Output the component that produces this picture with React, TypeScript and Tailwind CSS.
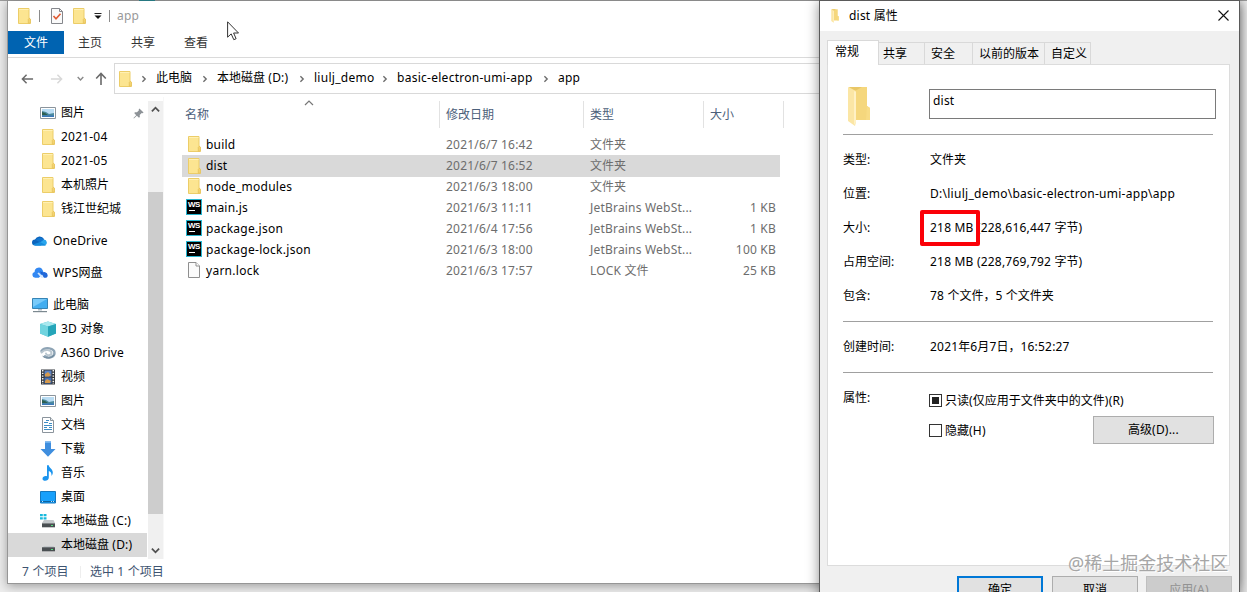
import type { ReactNode } from "react";

const isWide = (s: string) => /[\u3000-\u9fff\uff00-\uffef]/.test(s);
const latinTracking = (s: string) => (/^[a-z_.-]{9,}$|\\/.test(s) ? "tracking-[0.27px]" : "tracking-[0.2px]");

/* Chinese runs keep the 12px grid, Latin runs are set slightly wider. */
function T({ children }: { children: string }) {
  const parts = children.split(/([\u3000-\u9fff\uff00-\uffef]+)/).filter(Boolean);
  return (
    <span className="whitespace-pre">
      {parts.map((p, i) => (
        <span key={i} className={isWide(p) ? "tracking-normal" : latinTracking(p)}>
          {p}
        </span>
      ))}
    </span>
  );
}

function Folder({ className = "h-4 w-[14px]" }: { className?: string }) {
  return (
    <svg viewBox="0 0 14 16" className={`block shrink-0 ${className}`}>
      <path d="M1.500.5h10.500v9.500l1.300 1v4.500H1.500z" fill="#fce591" stroke="#eccd68" />
      <path d="M2 1h9.500v1H2z" fill="#fff0b4" />
      <path d="M11.300 15.200v-4l1-1 1 1v4z" fill="#f8d775" stroke="#e4c05a" strokeWidth=".8" />
    </svg>
  );
}

function BigFolder({ className }: { className: string }) {
  return (
    <svg viewBox="0 0 22 41" className={`block shrink-0 ${className}`}>
      <path d="M1 1h18v19l3 2v12H7z" fill="#f5d77d" />
      <path d="M1 1h13l-7 4z" fill="#e9c766" />
      <path d="M19 20l3 2v12h-4z" fill="#f8dc86" />
      <path d="M0 1l8 4v31l-1 4-7-5z" fill="#fbe6a5" />
      <path d="M6 5l2 1v30l-2 3z" fill="#fff1c4" />
    </svg>
  );
}

function Picture() {
  return (
    <svg viewBox="0 0 16 16" className="block size-4 shrink-0">
      <path d="M.5 2.500h15v11H.5z" fill="#fff" stroke="#8b949c" />
      <path d="M2 4h12v8H2z" fill="#b9dcf3" />
      <path d="M2 6l4 1 3 2 5-1v4H2z" fill="#4d8a9d" />
      <path d="M2 7l3 1 3 2H2z" fill="#2c5e50" />
      <path d="M2 10.500h12V12H2z" fill="#3b78b8" />
    </svg>
  );
}

function OneDrive() {
  return (
    <svg viewBox="0 0 16 16" className="block size-4 shrink-0">
      <path d="M3 12.600a3 3 0 010-6A5 5 0 0112 6l-3 6.600z" fill="#0b64bd" />
      <path d="M5 6a5 5 0 017 .5L9 10 3.500 6.800z" fill="#1275ce" />
      <path d="M8 9.500l4-3a3.200 3.200 0 011 6.100H3z" fill="#2aa5ec" />
      <path d="M1 11.500L8 9l6 3.300-1 .3H3z" fill="#168bdc" />
    </svg>
  );
}

function Wps() {
  return (
    <svg viewBox="0 0 16 16" className="block size-4 shrink-0">
      <path d="M3.200 12.800a3 3 0 01-.6-5.900A4.200 4.200 0 0110.600 5l1.200 3-5 4.800z" fill="#3288f2" />
      <path d="M9.500 8.600a3.400 3.400 0 016.200 1.600 2.700 2.700 0 01-2.700 2.600h-1.200z" fill="#2168d9" />
      <path d="M5.400 8.200l1.400-.8 5.200 5.400H9.200z" fill="#d4e7ff" />
      <path d="M8 6.300l3.200 1.200-1.800 1.700z" fill="#1c5fd0" />
    </svg>
  );
}

function Pc() {
  return (
    <svg viewBox="0 0 16 16" className="block size-4 shrink-0">
      <path d="M.5 1.500h15v10H.5z" fill="#43aef0" stroke="#3684b5" />
      <path d="M1 2h14L1 10z" fill="#78caf9" />
      <path d="M6 12h4v1.500H6z" fill="#b3bfc7" />
      <path d="M1 14h14v1.200H1z" fill="#7c8990" />
    </svg>
  );
}

function Cube() {
  return (
    <svg viewBox="0 0 16 16" className="block size-4 shrink-0">
      <path d="M8 .5l8 2.500v9.500L8 15.700 0 12.500V3z" fill="#48bdce" />
      <path d="M8 .5L16 3 8 5.500 0 3z" fill="#a9e8ee" />
      <path d="M0 3l8 2.500v10.200L0 12.500z" fill="#70d4df" />
      <path d="M8 5.500L16 3v9.500l-8 3.200z" fill="#25a5b9" />
    </svg>
  );
}

function A360() {
  return (
    <svg viewBox="0 0 16 16" className="block size-4 shrink-0" fill="none" strokeLinecap="round">
      <path d="M1.500 6C5 1.500 14.500 3 14.500 8c0 4-6 6-9.500 3.300" stroke="#8ea4b5" strokeWidth="2.400" />
      <path d="M1.500 7.500C5 3.500 11.500 5 11.500 8c0 2.500-5 3-5.500.6" stroke="#b9c6cf" strokeWidth="2" />
      <path d="M3 11.500c3 2.500 9 2 11-1.500" stroke="#6d879a" strokeWidth="1" />
    </svg>
  );
}

function Film() {
  return (
    <svg viewBox="0 0 16 16" className="block size-4 shrink-0">
      <path d="M1 .5h14v15H1z" fill="#33373c" />
      <path d="M4.500 1.500h7v6h-7z" fill="#5b83c4" />
      <path d="M4.500 8.500h7v6h-7z" fill="#4570b6" />
      <path d="M5 5l3-2 3 3-2 1.500H5zM5 12l2-2 4 2-1 2H5z" fill="#d79a4c" />
      <path d="M2.700 1v14M13.300 1v14" stroke="#f5f5f5" strokeWidth="1.500" strokeDasharray="1.400 1.300" />
    </svg>
  );
}

function Doc() {
  return (
    <svg viewBox="0 0 16 16" className="block size-4 shrink-0">
      <path d="M2.500.5h8l3 3v12h-11z" fill="#fff" stroke="#8b949c" />
      <path d="M10.500.5v3h3" fill="#e7ebee" stroke="#8b949c" />
      <path d="M6 3.500h3M4 5.500h4M9 6.500h3M4 8.500h8M4 10.500h3M9 10.500h3M4 12.500h8" stroke="#3d8dc4" />
    </svg>
  );
}

function Download() {
  return (
    <svg viewBox="0 0 16 16" className="block size-4 shrink-0">
      <path d="M5 .5h6V8h4.500L8 15.700.5 8H5z" fill="#3f8ede" />
      <path d="M5 .5h6V2H5z" fill="#6eb0ee" />
    </svg>
  );
}

function Music() {
  return (
    <svg viewBox="0 0 16 16" className="block size-4 shrink-0">
      <path d="M7 .3h1.800c.2 2.800 4 3.700 4 7.200 0 1.500-.6 2.600-1.400 3.500.5-2.800-.8-4.300-2.600-5v6.800c0 3.600-6.300 3.900-6.300.9 0-2.200 2.600-3 4.500-2.400z" fill="#1b94ee" />
    </svg>
  );
}

function Desktop() {
  return (
    <svg viewBox="0 0 16 16" className="block size-4 shrink-0">
      <path d="M.5 2.500h15v11.500H.5z" fill="#18a0fb" stroke="#1577bd" />
      <path d="M1 12.500h14" stroke="#0c639f" strokeWidth="1" />
      <path d="M2 12.500h1M11 12.500h1M13 12.500h1" stroke="#b8e3ff" />
    </svg>
  );
}

function Drive({ system = false }: { system?: boolean }) {
  return (
    <svg viewBox="0 0 16 16" className="block size-4 shrink-0">
      <path d={system ? "M4 7h9.500l1.500 3H2z" : "M4 9h9.500l1.500 2H2z"} fill="#c3c7ca" />
      <path d="M2 10.300h13v4H2z" fill="#4a4f52" />
      <path d="M11 12.500h2" stroke="#56e07f" />
      {system ? <path d="M0 1h2.800v2.300H0zM3.600 1h2.900v2.300H3.600zM0 4.200h2.800v2.300H0zM3.600 4.200h2.900v2.300H3.600z" fill="#19b9dd" /> : null}
    </svg>
  );
}

function WebStorm() {
  return (
    <span className="-mt-px flex size-4 shrink-0 flex-col items-center border border-[#27b5cf] bg-black">
      <span className="h-[9px] font-['Liberation_Sans',sans-serif] text-[8px] leading-[9px] font-bold tracking-[-0.4px] text-white">WS</span>
      <span className="mt-[1px] mr-[4px] h-px w-[6px] bg-white" />
    </span>
  );
}

function BlankFile() {
  return (
    <svg viewBox="0 0 14 16" className="-mt-px ml-px block h-4 w-[14px] shrink-0">
      <path d="M1.500.5h7.500l3.500 3.500v11.500h-11z" fill="#fbfbfb" stroke="#8f8f8f" />
      <path d="M9 .5V4h3.500" fill="#fff" stroke="#8f8f8f" />
    </svg>
  );
}

function Chevron({ d, className, color = "#6b6b6b", w = 1.4 }: { d: string; className: string; color?: string; w?: number }) {
  return (
    <svg viewBox="0 0 10 10" className={`block shrink-0 ${className}`} fill="none" stroke={color} strokeWidth={w}>
      <path d={d} />
    </svg>
  );
}

const RIGHT = "M3 1.500L6.500 5 3 8.500";
const UP = "M1 7l4-4 4 4";
const DOWN = "M1 3l4 4 4-4";

type NavItem = { icon: ReactNode; label: string; root?: boolean; pinned?: boolean; active?: boolean };

const nav: NavItem[] = [
  { icon: <Picture />, label: "图片", pinned: true },
  { icon: <Folder className="mx-px h-4 w-[14px]" />, label: "2021-04" },
  { icon: <Folder className="mx-px h-4 w-[14px]" />, label: "2021-05" },
  { icon: <Folder className="mx-px h-4 w-[14px]" />, label: "本机照片" },
  { icon: <Folder className="mx-px h-4 w-[14px]" />, label: "钱江世纪城" },
  { icon: <OneDrive />, label: "OneDrive", root: true },
  { icon: <Wps />, label: "WPS网盘", root: true },
  { icon: <Pc />, label: "此电脑", root: true },
  { icon: <Cube />, label: "3D 对象" },
  { icon: <A360 />, label: "A360 Drive" },
  { icon: <Film />, label: "视频" },
  { icon: <Picture />, label: "图片" },
  { icon: <Doc />, label: "文档" },
  { icon: <Download />, label: "下载" },
  { icon: <Music />, label: "音乐" },
  { icon: <Desktop />, label: "桌面" },
  { icon: <Drive system />, label: "本地磁盘 (C:)" },
  { icon: <Drive />, label: "本地磁盘 (D:)", active: true },
];

const files = [
  { kind: "dir", name: "build", date: "2021/6/7 16:42", type: "文件夹", size: "" },
  { kind: "dir", name: "dist", date: "2021/6/7 16:52", type: "文件夹", size: "", selected: true },
  { kind: "dir", name: "node_modules", date: "2021/6/3 18:00", type: "文件夹", size: "" },
  { kind: "ws", name: "main.js", date: "2021/6/3 11:11", type: "JetBrains WebSt...", size: "1 KB" },
  { kind: "ws", name: "package.json", date: "2021/6/4 17:56", type: "JetBrains WebSt...", size: "1 KB" },
  { kind: "ws", name: "package-lock.json", date: "2021/6/3 18:00", type: "JetBrains WebSt...", size: "100 KB" },
  { kind: "file", name: "yarn.lock", date: "2021/6/3 17:57", type: "LOCK 文件", size: "25 KB" },
];

const crumbs = [
  { label: "此电脑", width: "w-[61px]" },
  { label: "本地磁盘 (D:)", width: "w-[97px]" },
  { label: "liulj_demo", width: "w-[83px]" },
  { label: "basic-electron-umi-app", width: "w-[161px]" },
  { label: "app", width: "w-[60px]" },
];

function TitleBar() {
  return (
    <div className="flex h-[30px] items-center pl-[9px]">
      <Folder className="-mt-px h-4 w-[14px]" />
      <span className="ml-[8px] h-3 w-px bg-[#8b8b8b]" />
      <svg viewBox="0 0 14 16" className="ml-[10px] block h-4 w-[14px]">
        <path d="M1.500.5h8l3 3v12h-11z" fill="#fafafa" stroke="#85878c" />
        <path d="M9.500.5v3h3" fill="none" stroke="#85878c" />
        <path d="M3.500 8l2.500 2.800 4.500-5" fill="none" stroke="#e05a32" strokeWidth="1.600" />
      </svg>
      <Folder className="ml-[8px] h-4 w-[14px]" />
      <svg viewBox="0 0 8 8" className="ml-[8px] block size-2">
        <path d="M.5 1.500h7" stroke="#222" />
        <path d="M.5 3.500h7L4 7z" fill="#111" />
      </svg>
      <span className="ml-[7px] h-3 w-px bg-[#8b8b8b]" />
      <span className="ml-[7px] text-[#999]"><T>app</T></span>
    </div>
  );
}

function AddressRow() {
  return (
    <div className="flex h-[39px] pt-[5px]">
      <div className="flex h-[31px] w-[106px] items-center pl-[13px]">
        <svg viewBox="0 0 14 12" className="block h-3 w-[13px]" fill="none" stroke="#6a6a6a" strokeWidth="1.600">
          <path d="M13 6H1.500M6 1.500L1.500 6 6 10.500" />
        </svg>
        <svg viewBox="0 0 14 12" className="ml-[16px] block h-3 w-[13px]" fill="none" stroke="#d8d8d8" strokeWidth="1.600">
          <path d="M1 6h11.500M8 1.500L12.500 6 8 10.500" />
        </svg>
        <Chevron d={DOWN} className="ml-[14px] size-[7px]" color="#888" w={2} />
        <svg viewBox="0 0 12 14" className="ml-[11px] block h-[14px] w-3" fill="none" stroke="#6a6a6a" strokeWidth="1.600">
          <path d="M6 13V1.500M1.200 6.500L6 1.500l4.800 5" />
        </svg>
      </div>
      <div className="flex h-[31px] flex-1 items-center border border-[#d9d9d9] pl-[3px]">
        <Folder />
        <div className="ml-[8px] flex items-center">
          {crumbs.map((c) => (
            <div key={c.label} className={`flex items-center ${c.width}`}>
              <Chevron d={RIGHT} className="size-[8px]" w={1.7} />
              <span className="-mt-px ml-[8px]"><T>{c.label}</T></span>
            </div>
          ))}
        </div>
      </div>
    </div>
  );
}

function Sidebar() {
  return (
    <div className="flex w-[156px] shrink-0">
      <div className="flex w-[140px] flex-col pt-[4px]">
        {nav.map((n, i) => (
          <div
            key={i}
            className={`flex h-6 shrink-0 items-center ${n.root ? "mt-2 pl-[24px]" : "pl-[32px]"} ${n.active ? "mr-px bg-[#d9d9d9]" : ""}`}
          >
            {n.icon}
            <span className="ml-[5px] flex-1"><T>{n.label}</T></span>
            {n.pinned ? (
              <svg viewBox="0 0 12 12" className="mr-[4px] block size-[11px]">
                <path d="M7 .5L11.500 5l-1 .8-1-.3-2.200 2.200.2 2-1 1L4.200 8.400 1 11.500l-.5-.5 3-3.200L1.300 5.500l1-1 2 .2 2.200-2.200-.3-1z" fill="#8d9297" />
              </svg>
            ) : null}
          </div>
        ))}
      </div>
      <div className="mt-[4px] flex h-[458px] w-[15px] flex-col items-center bg-[#f0f0f0]">
        <div className="flex h-[91px] pt-[4px]"><Chevron d={UP} className="size-[9px]" color="#505050" w={2} /></div>
        <div className="h-[322px] w-[15px] bg-[#cdcdcd]" />
        <div className="flex flex-1 items-end pb-[4px]"><Chevron d={DOWN} className="size-[9px]" color="#505050" w={2} /></div>
      </div>
      <div className="w-px bg-[#f8f8f8]" />
    </div>
  );
}

function FileList() {
  return (
    <div className="flex flex-1 flex-col pl-[18px]">
      <div className="relative flex h-[37px] pt-[4px] text-[#4c607a]">
        <Chevron d={UP} className="absolute top-[1px] left-[122px] size-[10px]" color="#777" w={1.2} />
        <div className="flex h-[27px] w-[258px] items-center border-r border-[#e2e2e2] pl-[3px]"><T>名称</T></div>
        <div className="flex h-[27px] w-[144px] items-center border-r border-[#e2e2e2] pl-[6px]"><T>修改日期</T></div>
        <div className="flex h-[27px] w-[120px] items-center border-r border-[#e2e2e2] pl-[6px]"><T>类型</T></div>
        <div className="flex h-[27px] w-[80px] items-center border-r border-[#e2e2e2] pl-[6px]"><T>大小</T></div>
      </div>
      {files.map((f) => (
        <div key={f.name} className={`flex h-[21px] w-[598px] items-center text-[#6d6d6d] ${f.selected ? "h-[22px] -mb-px bg-[#d9d9d9]" : ""}`}>
          <div className="flex w-[264px] items-center pl-[4px] text-black">
            <span className="flex w-[20px]">
              {f.kind === "dir" ? <Folder className="-mt-px ml-px h-4 w-[14px]" /> : f.kind === "ws" ? <WebStorm /> : <BlankFile />}
            </span>
            <T>{f.name}</T>
          </div>
          <div className="w-[144px]"><T>{f.date}</T></div>
          <div className="w-[106px]"><T>{f.type}</T></div>
          <div className="w-[80px] text-right"><T>{f.size}</T></div>
        </div>
      ))}
    </div>
  );
}

function Explorer() {
  return (
    <div className="absolute top-px left-[7px] flex h-[583px] w-[1232px] flex-col border-b border-l border-[#969696] bg-white shadow-[0_2px_10px_rgba(0,0,0,0.35)]">
      <TitleBar />
      <div className="flex h-[27px] border-b border-[#dadada] text-[#333]">
        <div className="flex h-[23px] w-[56px] items-center justify-center bg-[#0063b1] pt-px text-white"><T>文件</T></div>
        <div className="flex h-[23px] w-[52px] items-center justify-center pt-px"><T>主页</T></div>
        <div className="flex h-[23px] w-[54px] items-center justify-center pt-px"><T>共享</T></div>
        <div className="flex h-[23px] w-[52px] items-center justify-center pt-px"><T>查看</T></div>
      </div>
      <AddressRow />
      <div className="flex h-[462px] overflow-hidden">
        <Sidebar />
        <FileList />
      </div>
      <div className="flex h-[24px] items-center pt-[2px] pl-[14px] text-[#3d5370]">
        <span className="w-[58px]"><T>7 个项目</T></span>
        <span className="mr-[9px] h-3 w-px bg-[#eee]" />
        <T>选中 1 个项目</T>
      </div>
      <svg viewBox="0 0 12 20" className="absolute top-[20px] left-[219px] block h-5 w-3">
        <path d="M.6.8v15.400l3.600-3.300 2.600 5.800 2.300-1-2.500-5.700h4.900z" fill="#fff" stroke="#333" />
      </svg>
    </div>
  );
}

const tabs = [
  { label: "共享", width: "w-[46px]", pad: "pl-[4px]" },
  { label: "安全", width: "w-[48px]", pad: "pl-[6px]" },
  { label: "以前的版本", width: "w-[72px]", pad: "pl-[6px]" },
  { label: "自定义", width: "w-[46px]", pad: "pl-[6px]" },
];

function Field({ label, children }: { label: string; children: string }) {
  return (
    <div className="flex h-[34px] items-center">
      <span className="w-[87px]"><T>{label}</T></span>
      <T>{children}</T>
    </div>
  );
}

function Properties() {
  return (
    <div className="absolute top-0 left-[819px] flex h-[640px] w-[421px] flex-col border border-[#5a5a5a] bg-[#f0f0f0] shadow-[0_2px_12px_rgba(0,0,0,0.45)]">
      <div className="flex h-[30px] shrink-0 items-center bg-white pr-[10px] pl-[10px]">
        <BigFolder className="h-[14px] w-[10px]" />
        <span className="ml-[9px] flex-1"><T>dist 属性</T></span>
        <svg viewBox="0 0 11 11" className="-mt-px block size-[11px]" stroke="#111" strokeWidth="1.100"><path d="M.5.5l10 10M10.500.5l-10 10" /></svg>
      </div>
      <div className="flex h-[33px] shrink-0 items-end pl-[7px]">
        <div className="z-10 -mb-px flex h-[25px] w-[52px] border border-b-0 border-[#d9d9d9] bg-white pt-[2px] pl-[7px]"><T>常规</T></div>
        {tabs.map((t) => (
          <div key={t.label} className={`flex h-[22px] items-center border-t border-r border-[#d9d9d9] ${t.width} ${t.pad}`}>
            <T>{t.label}</T>
          </div>
        ))}
      </div>
      <div className="ml-[7px] flex h-[502px] w-[403px] shrink-0 flex-col border border-[#dcdcdc] bg-white pl-[15px]">
        <div className="flex h-[70px] w-[370px] border-b border-[#a0a0a0]">
          <BigFolder className="mt-[21px] ml-[5px] h-[41px] w-[22px]" />
          <div className="mt-[24px] ml-[59px] flex h-[30px] w-[287px] shrink-0 border border-[#7a7a7a] pt-[2px] pl-[3px]"><T>dist</T></div>
        </div>
        <div className="flex h-[187px] w-[370px] flex-col border-b border-[#a0a0a0] pt-[8px]">
          <Field label="类型:">文件夹</Field>
          <Field label="位置:">D:\liulj_demo\basic-electron-umi-app\app</Field>
          <Field label="大小:">218 MB (228,616,447 字节)</Field>
          <Field label="占用空间:">218 MB (228,769,792 字节)</Field>
          <Field label="包含:">78 个文件，5 个文件夹</Field>
        </div>
        <div className="flex h-[51px] w-[370px] flex-col border-b border-[#a0a0a0] pt-[8px]">
          <Field label="创建时间:">2021年6月7日，16:52:27</Field>
        </div>
        <div className="flex w-[371px]">
          <span className="w-[86px] pt-[16px]"><T>属性:</T></span>
          <div className="flex flex-1 flex-col">
            <div className="mt-[17px] flex h-[20px] items-center">
              <span className="flex size-[13px] items-center justify-center border border-[#333] bg-white"><span className="size-[7px] bg-[#222]" /></span>
              <span className="ml-[3px] pt-px"><T>只读(仅应用于文件夹中的文件)(R)</T></span>
            </div>
            <div className="mt-[6px] flex h-[28px] items-center">
              <span className="size-[13px] border border-[#333] bg-white" />
              <span className="ml-[3px] flex-1 pt-px"><T>隐藏(H)</T></span>
              <div className="flex h-[28px] w-[121px] items-center justify-center border border-[#adadad] bg-[#e1e1e1]"><T>高级(D)...</T></div>
            </div>
          </div>
        </div>
      </div>
      <div className="mt-[10px] flex pl-[137px]">
        <div className="flex h-[28px] w-[86px] items-center justify-center border-2 border-[#0078d7] bg-[#e1e1e1]"><T>确定</T></div>
        <div className="ml-[9px] flex h-[28px] w-[86px] items-center justify-center border border-[#adadad] bg-[#e1e1e1]"><T>取消</T></div>
        <div className="ml-[8px] flex h-[28px] w-[86px] items-center justify-center border border-[#bfbfbf] bg-[#ccc] text-[#929292]"><T>应用(A)</T></div>
      </div>
      <div className="absolute top-[209px] left-[100px] h-[36px] w-[60px] rounded-[2px] border-4 border-[#fb0007]" />
    </div>
  );
}

export default function App() {
  return (
    <div className="relative h-[592px] w-[1247px] overflow-hidden bg-[#ededed] font-['Noto_Sans','Noto_Sans_CJK_SC',sans-serif] text-[12px] leading-[18px] text-black">
      <div className="flex h-px bg-[#9c9c9c]">
        <div className="ml-[139px] h-px w-4 bg-[#2b8791]" />
      </div>
      <Explorer />
      <Properties />
      <div className="absolute top-[551px] left-[1068px] text-[18px] leading-[24px] whitespace-nowrap text-[#a6a6a6] [text-shadow:1px_1px_0_#fff]">@稀土掘金技术社区</div>
    </div>
  );
}
